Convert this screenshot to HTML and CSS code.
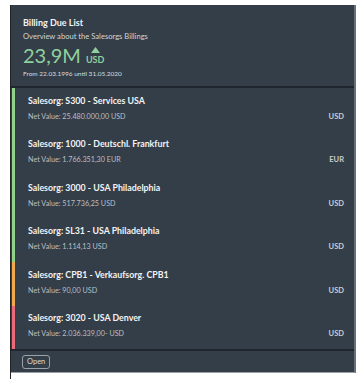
FILE: index.html
```html
<!DOCTYPE html>
<html lang="en">
<head>
  <meta charset="UTF-8" />
  <title>Billing Due List</title>
  <link rel="stylesheet" href="styles.css">
</head>
<body>
  <div class="frame">
    <section class="card">
      <header class="card-head">
        <h1>Billing Due List</h1>
        <p class="sub">Overview about the Salesorgs Billings</p>
        <div class="kpi">
          <span class="kpi-value">23,9M</span>
          <span class="kpi-side">
            <svg class="arrow" width="9" height="6" viewBox="0 0 9 6"><polygon points="4.5,0 9,6 0,6" fill="#8fd19e"/></svg>
            <span class="kpi-unit">USD</span>
          </span>
        </div>
        <p class="period">From 22.03.1996 until 31.05.2020</p>
      </header>

      <ul class="list">
        <li class="item good">
          <div class="item-main">
            <div class="item-title">Salesorg: S300 - Services USA</div>
            <div class="item-value">Net Value: 25.480.000,00 USD</div>
          </div>
          <span class="item-cur">USD</span>
        </li>
        <li class="item good">
          <div class="item-main">
            <div class="item-title">Salesorg: 1000 - Deutschl. Frankfurt</div>
            <div class="item-value">Net Value: 1.766.351,30 EUR</div>
          </div>
          <span class="item-cur">EUR</span>
        </li>
        <li class="item good">
          <div class="item-main">
            <div class="item-title">Salesorg: 3000 - USA Philadelphia</div>
            <div class="item-value">Net Value: 517.736,25 USD</div>
          </div>
          <span class="item-cur">USD</span>
        </li>
        <li class="item good">
          <div class="item-main">
            <div class="item-title">Salesorg: SL31 - USA Philadelphia</div>
            <div class="item-value">Net Value: 1.114,13 USD</div>
          </div>
          <span class="item-cur">USD</span>
        </li>
        <li class="item warn">
          <div class="item-main">
            <div class="item-title">Salesorg: CPB1 - Verkaufsorg. CPB1</div>
            <div class="item-value">Net Value: 90,00 USD</div>
          </div>
          <span class="item-cur">USD</span>
        </li>
        <li class="item bad">
          <div class="item-main">
            <div class="item-title">Salesorg: 3020 - USA Denver</div>
            <div class="item-value">Net Value: 2.036.339,00- USD</div>
          </div>
          <span class="item-cur">USD</span>
        </li>
      </ul>

      <footer class="card-foot">
        <button type="button" class="btn">Open</button>
      </footer>
    </section>
  </div>
</body>
</html>
```

FILE: styles.css
```css
:root {
  --card-bg: #343e48;
  --line-dark: #1f262d;
  --text: #f2f3f4;
  --text-soft: #b9bfc5;
  --green: #8fd19e;
  --bar-green: #8fd18a;
  --bar-orange: #f0a84e;
  --bar-red: #ea6a7c;
  --font-family: Lato, "Open Sans", sans-serif;
}

* {
  box-sizing: border-box;
}

body {
  margin: 0;
  background: #fff;
  font-family: var(--font-family);
}

.frame {
  margin: 5px 0 0 10px;
  width: 346px;
  padding-bottom: 6px;
  border-left: 1px solid #222;
}

.card {
  background: var(--card-bg);
  border-right: 2px solid #6a7078;
  border-bottom: 1px solid #9aa0a6;
  height: 368px;
  display: flex;
  flex-direction: column;
}

.card-head {
  padding: 11px 12px 0;
  height: 83px;
  border-bottom: 2px solid var(--line-dark);
  color: var(--text);
}

h1 {
  margin: 0;
  font-size: 9px;
  font-weight: 700;
  line-height: 13px;
}

.sub {
  margin: 2px 0 0;
  font-size: 7.6px;
  line-height: 10px;
  color: #d0d4d8;
}

.kpi {
  display: flex;
  align-items: flex-end;
  gap: 5px;
  margin-top: 3px;
  color: var(--green);
}

.kpi-value {
  font-size: 20px;
  line-height: 22px;
}

.kpi-side {
  display: flex;
  flex-direction: column;
  align-items: center;
  padding-bottom: 2px;
}

.arrow {
  display: block;
  margin-bottom: 2px;
}

.kpi-unit {
  font-size: 9px;
  font-weight: 700;
  line-height: 9px;
}

.period {
  margin: 4px 0 0;
  font-size: 6.5px;
  line-height: 8px;
  color: #d8dbde;
}

.list {
  list-style: none;
  margin: 0;
  padding: 0;
  flex: 1;
}

.item {
  display: flex;
  align-items: flex-end;
  height: 43.5px;
  padding: 0 10px 0 13px;
  border-left: 3px solid var(--bar-green);
  margin-left: 1px;
}

.item.warn { border-left-color: var(--bar-orange); }
.item.bad { border-left-color: var(--bar-red); }

.item-main {
  flex: 1;
  padding-bottom: 10px;
}

.item-title {
  font-size: 8.8px;
  font-weight: 700;
  color: var(--text);
  line-height: 12px;
}

.item-value {
  margin-top: 5px;
  font-size: 7.2px;
  color: var(--text-soft);
  line-height: 10px;
}

.item-cur {
  font-size: 7.5px;
  font-weight: 700;
  color: #c8cdd2;
  padding-bottom: 10px;
  line-height: 10px;
}

.card-foot {
  display: flex;
  align-items: center;
  height: 23px;
  border-top: 2px solid var(--line-dark);
  padding: 0 11px;
}

.btn {
  display: block;
  font-family: var(--font-family);
  font-size: 7.5px;
  color: #d8dbde;
  background: transparent;
  border: 1px solid #9aa1a8;
  border-radius: 3px;
  padding: 1px 4px;
  height: 14px;
  line-height: 10px;
}
```
